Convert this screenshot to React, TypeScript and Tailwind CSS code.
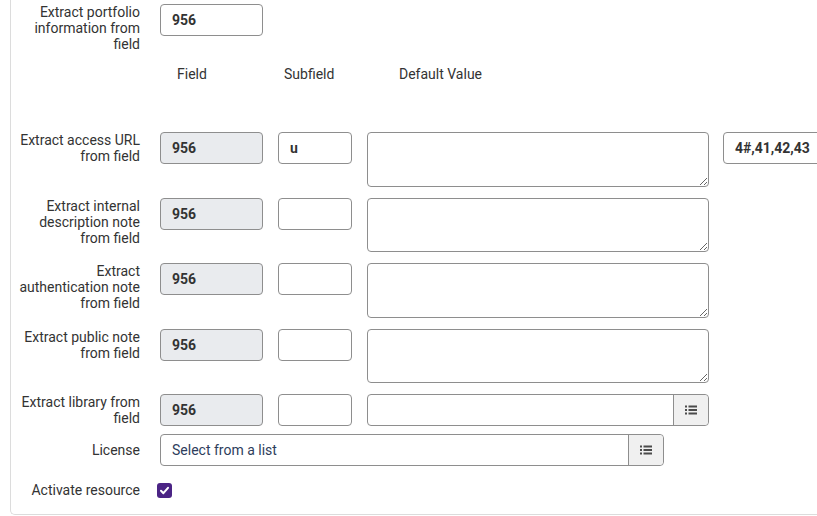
import React from "react";

const ListIcon = () => (
  <svg width="12" height="10" viewBox="0 0 12 10" fill="#4a4a4a">
    <rect x="0" y="0.5" width="2" height="2" />
    <rect x="0" y="4" width="2" height="2" />
    <rect x="0" y="7.5" width="2" height="2" />
    <rect x="3.5" y="0.5" width="8.5" height="2" />
    <rect x="3.5" y="4" width="8.5" height="2" />
    <rect x="3.5" y="7.5" width="8.5" height="2" />
  </svg>
);

const Label = ({ children, className = "" }: { children: React.ReactNode; className?: string }) => (
  <div className={"w-[129px] shrink-0 pl-[3px] text-right text-[14px] leading-4 text-[#333] " + className}>
    {children}
  </div>
);

const inputBase =
  "h-[32px] rounded-[4px] border border-[#8e8e8e] px-[11px] text-[14px] font-bold text-[#333] flex items-center";

const FieldBox = ({ value = "956", grey = true }: { value?: string; grey?: boolean }) => (
  <div className={inputBase + " w-[103px] " + (grey ? "bg-[#e9ebee]" : "bg-white")}>{value}</div>
);

const SubBox = ({ value = "" }: { value?: string }) => (
  <div className={inputBase + " w-[74px] bg-white"}>{value}</div>
);

const TextArea = ({ h }: { h: string }) => (
  <textarea
    className={"w-[342px] rounded-[4px] border border-[#8e8e8e] bg-white outline-none " + h}
    defaultValue=""
  />
);

const rows = [
  { label: ["Extract access URL", "from field"], sub: "u", h: "h-[55px]", mt: "mt-[50px]", extra: true },
  { label: ["Extract internal", "description note", "from field"], sub: "", h: "h-[54px]", mt: "mt-[11px]", extra: false },
  { label: ["Extract", "authentication note", "from field"], sub: "", h: "h-[55px]", mt: "mt-[11px]", extra: false },
  { label: ["Extract public note", "from field"], sub: "", h: "h-[54px]", mt: "mt-[11px]", extra: false },
];

export default function App() {
  return (
    <div
      className="w-[817px] h-[516px] overflow-hidden bg-white"
      style={{ fontFamily: "Roboto, 'Liberation Sans', sans-serif" }}
    >
      <div className="ml-[10px] w-[900px] border-l border-b border-[#dcdcdc] rounded-bl-[5px] pt-[4px] pb-[16px]">
        {/* Row 1 */}
        <div className="flex items-start">
          <Label>
            Extract portfolio
            <br />
            information from
            <br />
            field
          </Label>
          <div className="ml-[20px]">
            <FieldBox grey={false} />
          </div>
        </div>

        {/* Header */}
        <div className="mt-[14px] flex text-[14px] leading-4 text-[#333]">
          <div className="w-[149px] shrink-0" />
          <div className="w-[124px] shrink-0 pl-[17px]">Field</div>
          <div className="w-[115px] shrink-0">Subfield</div>
          <div>Default Value</div>
        </div>

        {rows.map((r, i) => (
          <div key={i} className={"flex items-start " + r.mt}>
            <Label>
              {r.label.map((l, j) => (
                <div key={j}>{l}</div>
              ))}
            </Label>
            <div className="ml-[20px] flex items-start gap-[15px]">
              <FieldBox />
              <SubBox value={r.sub} />
              <TextArea h={r.h} />
              {r.extra && (
                <div className={inputBase + " -ml-[1px] w-[130px] bg-white"}>4#,41,42,43</div>
              )}
            </div>
          </div>
        ))}

        {/* Library row */}
        <div className="mt-[11px] flex items-start">
          <Label>
            <div>Extract library from</div>
            <div>field</div>
          </Label>
          <div className="ml-[20px] flex items-start gap-[15px]">
            <FieldBox />
            <SubBox />
            <div className="flex h-[32px] w-[342px] rounded-[4px] border border-[#8e8e8e] bg-white">
              <div className="flex-1" />
              <div className="flex w-[35px] items-center justify-center rounded-r-[4px] border-l border-[#8e8e8e] bg-[#f0f0f0]">
                <ListIcon />
              </div>
            </div>
          </div>
        </div>

        {/* License */}
        <div className="mt-[8px] flex items-center">
          <Label>License</Label>
          <div className="ml-[20px] flex h-[32px] w-[504px] rounded-[4px] border border-[#8e8e8e] bg-white">
            <div className="flex flex-1 items-center px-[11px] text-[14px] text-[#2e3d5c]">Select from a list</div>
            <div className="flex w-[35px] items-center justify-center rounded-r-[4px] border-l border-[#8e8e8e] bg-[#f0f0f0]">
              <ListIcon />
            </div>
          </div>
        </div>

        {/* Activate */}
        <div className="mt-[16px] flex items-center">
          <Label>Activate resource</Label>
          <div className="ml-[17px] flex h-[15px] w-[15px] items-center justify-center rounded-[3px] bg-[#4b2485]">
            <svg width="11" height="11" viewBox="0 0 11 11" fill="none">
              <path d="M2 5.8 L4.4 8.2 L9 2.8" stroke="white" strokeWidth="2" strokeLinecap="round" strokeLinejoin="round" />
            </svg>
          </div>
        </div>
      </div>
    </div>
  );
}
